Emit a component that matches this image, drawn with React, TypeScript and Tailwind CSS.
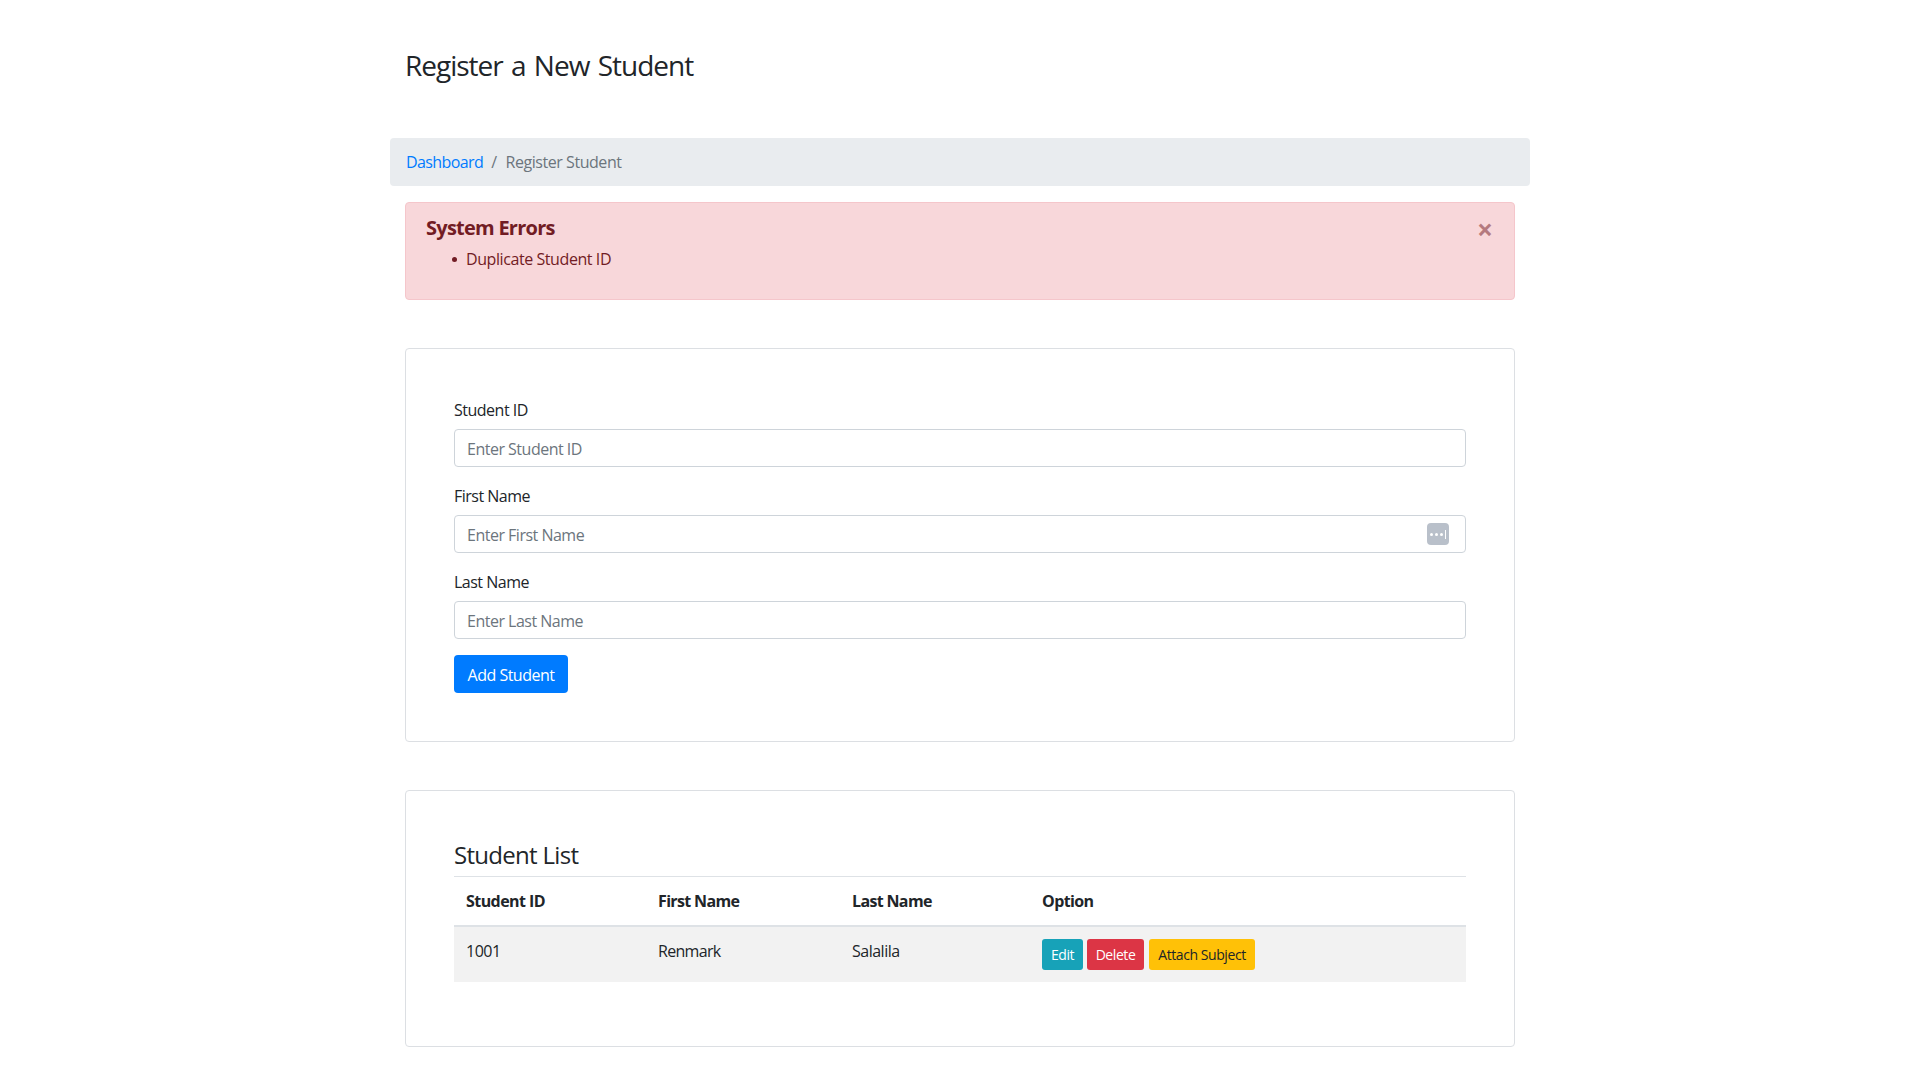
import { useState } from 'react';

const font = { fontFamily: '"Open Sans", "Noto Sans", sans-serif' };

interface Student {
  id: string;
  firstName: string;
  lastName: string;
}

const students: Student[] = [{ id: '1001', firstName: 'Renmark', lastName: 'Salalila' }];

function Field({ label, placeholder, manager }: { label: string; placeholder: string; manager?: boolean }) {
  const [value, setValue] = useState('');

  return (
    <div className="mb-4">
      <label className="block mb-2 h-6 pt-px text-base leading-6 text-[#212529] tracking-[-0.5px]">{label}</label>
      <div className="relative">
        <input
          value={value}
          onChange={(e) => setValue(e.target.value)}
          placeholder={placeholder}
          className="block w-full h-[38px] px-3 pt-[2px] border border-[#ced4da] rounded bg-white text-base tracking-[-0.5px] text-[#495057] placeholder:text-[#6c757d] outline-none"
        />
        {manager && (
          <div className="absolute right-[17px] top-[8px] w-[22px] h-[22px] rounded-[4px] bg-[#b9c0ca] flex items-center justify-center gap-[2px]">
            <span className="w-[3px] h-[3px] rounded-full bg-white" />
            <span className="w-[3px] h-[3px] rounded-full bg-white" />
            <span className="w-[3px] h-[3px] rounded-full bg-white" />
            <span className="w-px h-[9px] bg-white" />
          </div>
        )}
      </div>
    </div>
  );
}

export default function App() {
  return (
    <div style={font} className="min-h-[1067px] bg-white text-[#212529]">
      <div className="w-[1140px] mx-auto">
        <h3 className="mx-[15px] pt-[48px] h-[138px] text-[28px] leading-[34px] font-normal tracking-[-1px] [word-spacing:2px]">
          Register a New Student
        </h3>

        <nav className="h-12 px-4 bg-[#e9ecef] rounded flex items-center text-base tracking-[-0.5px]">
          <a href="#" className="text-[#007bff] tracking-[-0.6px]">Dashboard</a>
          <span className="px-2 text-[#6c757d]">/</span>
          <span className="text-[#6c757d] tracking-[-0.45px] ml-px">Register Student</span>
        </nav>

        <div className="mx-[15px] mt-4 relative h-[98px] border border-[#f5c6cb] rounded bg-[#f8d7da] text-[#721c24] pl-5 pt-[13px]">
          <h5 className="text-xl leading-6 font-bold tracking-[-0.75px]">System Errors</h5>
          <ul className="mt-[7px] pl-10 text-base leading-6 tracking-[-0.42px]">
            <li className="relative">
              <span className="absolute left-[-14px] top-[10px] w-[5px] h-[5px] rounded-full bg-[#721c24]" />
              Duplicate Student ID
            </li>
          </ul>
          <span className="absolute right-[21px] top-[14px] text-[28px] leading-6 font-bold text-[#721c24]/50">×</span>
        </div>

        <div className="mx-[15px] mt-12 border border-[#dcdfe3] rounded p-12 pb-[48px]">
          <Field label="Student ID" placeholder="Enter Student ID" />
          <Field label="First Name" placeholder="Enter First Name" manager />
          <Field label="Last Name" placeholder="Enter Last Name" />
          <button className="h-[38px] w-[114px] pt-[2px] rounded bg-[#007bff] text-white text-base tracking-[-0.5px]">
            Add Student
          </button>
        </div>

        <div className="mx-[15px] mt-12 border border-[#dcdfe3] rounded px-12 pt-12 h-[257px]">
          <h4 className="h-[38px] text-2xl leading-8 font-normal tracking-[-0.7px] border-b border-[#dee2e6]">
            Student List
          </h4>
          <table className="w-full table-fixed text-base tracking-[-0.5px]">
            <colgroup>
              <col className="w-[192px]" />
              <col className="w-[194px]" />
              <col className="w-[190px]" />
              <col />
            </colgroup>
            <thead>
              <tr className="h-[49px] border-b-2 border-[#dee2e6] text-left">
                <th className="px-3 font-bold tracking-[-0.55px]">Student ID</th>
                <th className="px-3 font-bold tracking-[-0.65px]">First Name</th>
                <th className="px-3 font-bold tracking-[-0.65px]">Last Name</th>
                <th className="px-3 font-bold tracking-[-0.6px]">Option</th>
              </tr>
            </thead>
            <tbody>
              {students.map((student) => (
                <tr key={student.id} className="h-[56px] bg-[#f2f2f2]">
                  <td className="px-3 pb-[8px]">{student.id}</td>
                  <td className="px-3 pb-[8px] tracking-[-0.7px]">{student.firstName}</td>
                  <td className="px-3 pb-[8px]">{student.lastName}</td>
                  <td className="px-3">
                    <div className="flex text-sm tracking-[-0.42px]">
                      <button className="h-[31px] w-[41px] rounded-[3px] bg-[#17a2b8] text-white">Edit</button>
                      <button className="ml-[4px] h-[31px] w-[57px] rounded-[3px] bg-[#dc3545] text-white">Delete</button>
                      <button className="ml-[5px] h-[31px] w-[106px] rounded-[3px] bg-[#ffc107] text-[#212529]">Attach Subject</button>
                    </div>
                  </td>
                </tr>
              ))}
            </tbody>
          </table>
        </div>
      </div>
    </div>
  );
}
